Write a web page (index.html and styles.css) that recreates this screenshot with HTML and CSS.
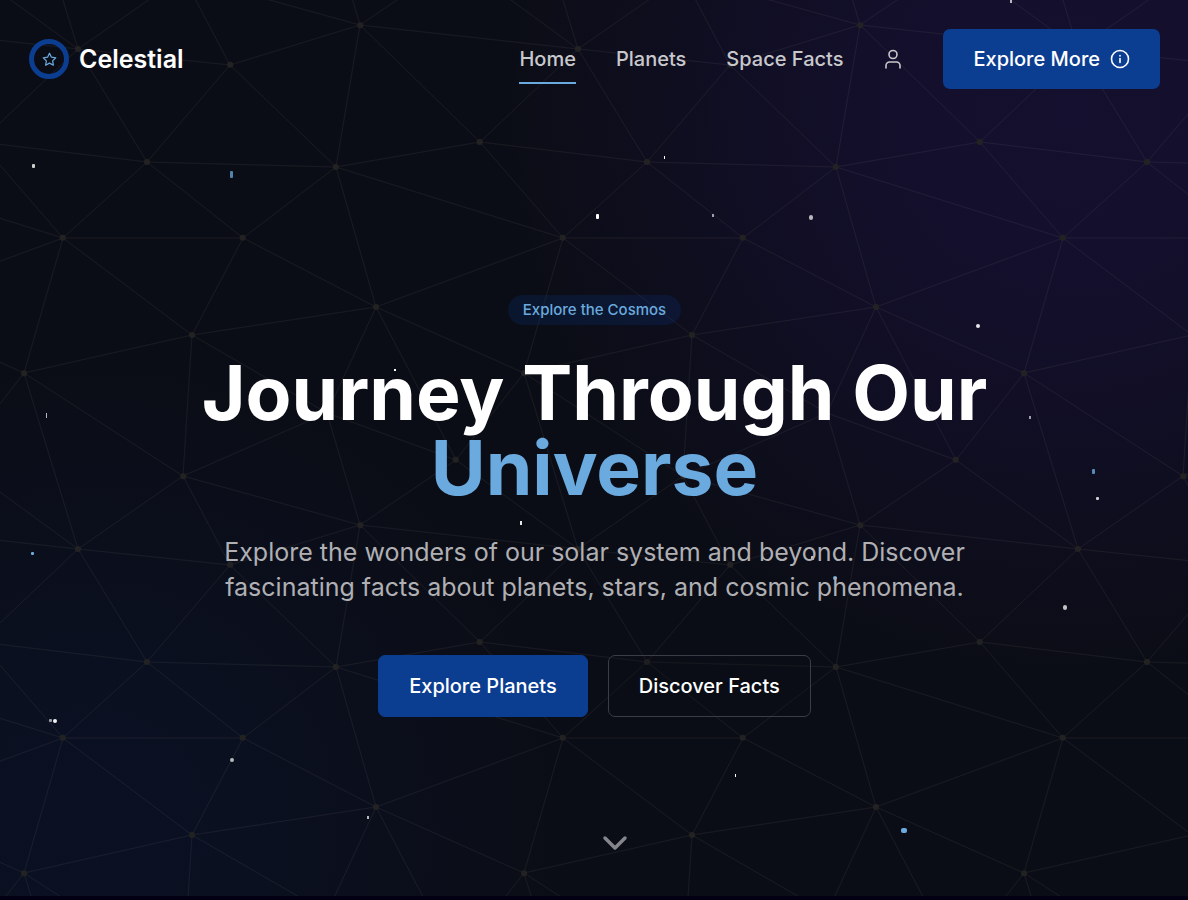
FILE: index.html
```html
<!DOCTYPE html>
<html lang="en">
<head>
<meta charset="utf-8">
<meta name="viewport" content="width=device-width, initial-scale=1">
<title>Celestial</title>
<link rel="stylesheet" href="styles.css">
</head>
<body>
<div class="page">
  <svg class="sky" aria-hidden="true">
    <defs>
      <pattern id="net" width="500" height="500" patternUnits="userSpaceOnUse">
        <g id="links" class="links">
          <path id="mesh" d="M360 25L578 49M78 49L-44-40M78 49L24-127M78 49L183-24M78 49L230 65M78 49L147 162M78 49L-20 142M230 65L183-24M230 65L360 25M230 65L147 162M230 65L336 167M360 25L183-24M360 25L327-87M360 25L456-40M360 25L480 142M360 25L336 167M480 142L578 49M480 142L647 162M147 162L336 167M147 162L63 238M147 162L243 238M480 142L336 167M480 142L563 238M336 167L243 238M336 167L376 307M336 167L563 238M147 162L-20 142M63 238L-20 142M63 238L-164 167M63 238L-124 307M63 238H243M63 238L24 373M63 238L192 335M243 238L192 335M243 238L376 307M376 307L563 238M192 335L24 373M192 335L183 476M192 335L376 307M192 335L327 413M24 373L-124 307M376 307L524 373M24 373L-44 460M456 460L524 373M24 373L183 476M24 373L78 549M376 307L327 413M376 307L456 460M327 413L183 476M327 413L360 525M327 413L456 460M456 460L578 549M456 460L360 525M183 476L360 525M183 476L78 549M183 476L230 565M78 49L-140 25M78 549L-44 460"/>
        </g>
        <g class="nodes">
          <circle cx="360.300" cy="25.300" r="3"/><circle cx="78" cy="49" r="3"/><circle cx="230.200" cy="64.700" r="3"/><circle cx="479.700" cy="142" r="3"/><circle cx="147" cy="162" r="3"/><circle cx="335.800" cy="167" r="3"/><circle cx="62.700" cy="237.700" r="3"/><circle cx="242.700" cy="237.700" r="3"/><circle cx="376" cy="307" r="3"/><circle cx="192" cy="335" r="3"/><circle cx="24" cy="373.300" r="3"/><circle cx="327" cy="413" r="3"/><circle cx="455.700" cy="459.700" r="3"/><circle cx="183.300" cy="476.300" r="3"/>
        </g>
      </pattern>
    </defs>
    <rect width="100%" height="100%" fill="url(#net)"/>
    <g class="stars">
      <rect x="32" y="164" width="3" height="4" rx="1" opacity=".8"/>
      <rect x="230" y="171" width="3" height="7" rx="1" class="blue" opacity=".75"/>
      <rect x="1010" y="0" width="2" height="3" opacity=".7"/>
      <rect x="664" y="156" width="1" height="3"/>
      <rect x="596" y="214" width="3" height="5" rx="1"/>
      <rect x="712" y="214" width="2" height="3" opacity=".6"/>
      <rect x="809" y="215" width="4" height="5" rx="2" opacity=".7"/>
      <rect x="976" y="324" width="4" height="4" rx="2" opacity=".9"/>
      <rect x="394" y="369" width="2" height="2"/>
      <rect x="46" y="413" width="1" height="5" opacity=".7"/>
      <rect x="1029" y="416" width="2" height="3" opacity=".6"/>
      <rect x="1092" y="469" width="3" height="5" rx="1" class="blue" opacity=".8"/>
      <rect x="1096" y="497" width="3" height="3" rx="1" opacity=".8"/>
      <rect x="520" y="521" width="2" height="4" opacity=".9"/>
      <rect x="31" y="552" width="3" height="3" rx="1" class="blue"/>
      <rect x="811" y="556" width="3" height="4" rx="1" opacity=".8"/>
      <rect x="833" y="576" width="4" height="4" rx="2" class="blue"/>
      <rect x="1063" y="605" width="4" height="5" rx="2" opacity=".75"/>
      <rect x="49" y="719" width="3" height="3" rx="1" opacity=".6"/>
      <rect x="53" y="719" width="4" height="4" rx="2" opacity=".95"/>
      <rect x="230" y="758" width="4" height="4" rx="2" opacity=".7"/>
      <rect x="367" y="816" width="2" height="3" opacity=".7"/>
      <rect x="735" y="774" width="1" height="3"/>
      <rect x="901" y="828" width="6" height="5" rx="2" class="blue"/>
    </g>
  </svg>

  <header class="header">
    <a class="brand" href="#">
      <span class="brand-mark">
        <svg viewBox="0 0 24 24" width="15" height="15" aria-hidden="true"><path d="M12 2l3.100 6.300 6.900 1-5 4.900 1.200 6.900L12 17.800l-6.200 3.300L7 14.200 2 9.300l6.900-1z"/></svg>
      </span>
      Celestial
    </a>
    <nav class="nav">
      <a class="nav-link active" href="#">Home</a>
      <a class="nav-link" href="#planets">Planets</a>
      <a class="nav-link" href="#facts">Space Facts</a>
      <button class="user" type="button" aria-label="Account">
        <svg viewBox="0 0 20 20" width="20" height="20" aria-hidden="true"><circle cx="10" cy="5.500" r="4"/><path d="M3 19v-2.500a3.500 3.500 0 0 1 3.500-3.500h7a3.500 3.500 0 0 1 3.500 3.500V19"/></svg>
      </button>
      <button class="btn primary" type="button">Explore More
        <svg viewBox="0 0 20 20" width="20" height="20" aria-hidden="true"><circle cx="10" cy="10" r="8.500"/><path d="M10 9.500v4M10 6.500v.5"/></svg>
      </button>
    </nav>
  </header>

  <main class="hero">
    <span class="badge">Explore the Cosmos</span>
    <h1 class="title">Journey Through Our <span class="accent">Universe</span></h1>
    <p class="lead">Explore the wonders of our solar system and beyond. Discover fascinating facts about planets, stars, and cosmic phenomena.</p>
    <div class="actions">
      <button class="btn primary bordered" type="button">Explore Planets</button>
      <button class="btn outline bordered" type="button">Discover Facts</button>
    </div>
  </main>

  <a class="scroll" href="#planets" aria-label="Scroll down">
    <svg viewBox="0 0 40 40" width="40" height="40" aria-hidden="true"><path d="M10 15l10 10 10-10"/></svg>
  </a>
</div>
</body>
</html>
```
FILE: styles.css
```css
* {
  box-sizing: border-box;
}

body {
  margin: 0;
  background: #030014;
  color: #fff;
  font-family: Inter, "Liberation Sans", sans-serif;
  font-size: 20px;
}

a {
  color: inherit;
  text-decoration: none;
}

button {
  font: inherit;
  color: inherit;
}

svg {
  fill: none;
  stroke: currentColor;
  stroke-width: 1.6;
  stroke-linecap: round;
  stroke-linejoin: round;
}

.page {
  position: relative;
  display: flex;
  flex-direction: column;
  min-height: calc(100vh - 4px);
  background:
    radial-gradient(circle at 90% 12%, rgba(38, 20, 92, .34) 0, rgba(38, 20, 92, .3) 200px, transparent 560px),
    radial-gradient(circle at 8% 92%, rgba(8, 32, 84, .2) 0, rgba(8, 32, 84, .16) 160px, transparent 460px),
    #0b0d16;
}

.sky {
  position: absolute;
  inset: 0;
  width: 100%;
  height: 100%;
  stroke: none;
}

.links {
  stroke: rgba(255, 235, 200, .06);
  stroke-width: 1;
}

.nodes {
  fill: #222222;
  stroke: none;
}

.stars {
  fill: #fff;
  stroke: none;
}

.stars .blue {
  fill: #6aaade;
}

.header {
  position: relative;
  display: flex;
  align-items: center;
  justify-content: space-between;
  padding: 29px 28px 0 29px;
}

.brand {
  display: flex;
  align-items: center;
  gap: 10px;
  font-size: 25px;
  font-weight: 600;
}

.brand-mark {
  display: grid;
  place-items: center;
  width: 40px;
  height: 40px;
  border: 5px solid #0b3d91;
  border-radius: 50%;
  color: #6aaade;
}

.brand-mark svg {
  stroke-width: 2;
}

.nav {
  display: flex;
  align-items: center;
  gap: 40px;
  color: #c8c8cc;
  font-weight: 500;
}

.nav-link {
  padding: 10px 0 8px;
  line-height: 30px;
  border-bottom: 2px solid transparent;
}

.nav-link.active {
  border-color: #6aaade;
}

.user {
  display: grid;
  padding: 0;
  border: 0;
  background: none;
}

.btn {
  display: inline-flex;
  align-items: center;
  gap: 10px;
  padding: 15px 30px;
  border: 0;
  border-radius: 7px;
  color: #fff;
  font-weight: 500;
  line-height: 30px;
}

.primary {
  background: #0b3d91;
}

.bordered {
  border: 1px solid #0b3d91;
}

.outline {
  border-color: #3c3d44;
  background: rgba(11, 13, 21, .2);
}

.hero {
  position: relative;
  display: flex;
  flex: 1;
  flex-direction: column;
  align-items: center;
  padding: 206px 40px 0 41px;
  text-align: center;
}

.badge {
  padding: 5px 15px;
  border-radius: 15px;
  background: rgba(11, 61, 145, .2);
  color: #6aaade;
  font-size: 15px;
  font-weight: 500;
  line-height: 20px;
}

.title {
  max-width: 960px;
  margin: 30px 0;
  font-size: 75px;
  font-weight: 700;
  line-height: 75px;
}

.accent {
  display: block;
  color: #6aaade;
}

.lead {
  max-width: 800px;
  margin: 0;
  color: #b0b0b4;
  font-size: 25px;
  line-height: 35px;
}

.actions {
  display: flex;
  flex-wrap: wrap;
  justify-content: center;
  gap: 20px;
  margin-top: 50px;
}

.scroll {
  position: relative;
  align-self: center;
  display: grid;
  margin: 0 0 33px 42px;
  color: #85868c;
}

.scroll svg {
  stroke-width: 3.5;
}
```
